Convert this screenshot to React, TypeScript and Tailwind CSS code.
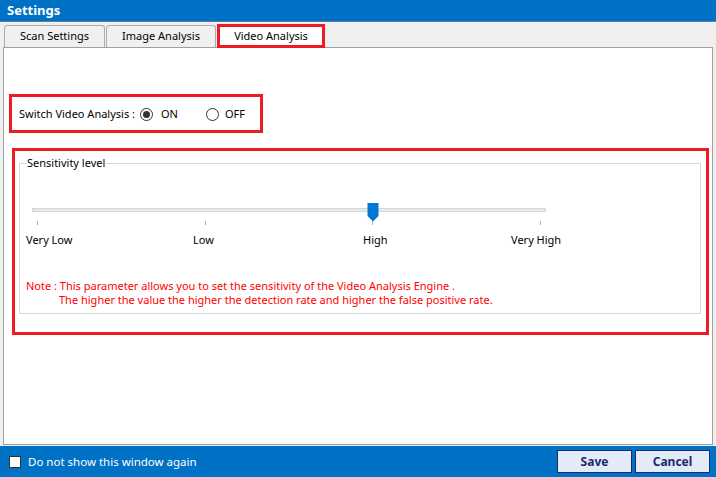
import React from "react";

const font = { fontFamily: "'Noto Sans', 'DejaVu Sans', sans-serif" };

const Tab: React.FC<{ label: string; active?: boolean; width: string }> = ({ label, active, width }) => {
	if (active) {
		return (
			<div className={`${width} h-[24px] -mb-px border-[3px] border-[#ed1c24] bg-white flex items-center justify-center text-[11px] text-black`}>
				{label}
			</div>
		);
	}
	return (
		<div className={`${width} h-[22px] mt-[2px] border border-b-0 border-[#acacac] rounded-t-[3px] bg-[#f0f0f0] flex items-center justify-center text-[11px] text-black`}>
			{label}
		</div>
	);
};

const Radio: React.FC<{ checked?: boolean }> = ({ checked }) => (
	<span className="w-[13px] h-[13px] rounded-full border border-[#333] bg-white flex items-center justify-center">
		{checked && <span className="w-[7px] h-[7px] rounded-full bg-[#333]" />}
	</span>
);

const ticks = [5, 173, 340, 508];

const App: React.FC = () => {
	return (
		<div style={font} className="w-[716px] h-[477px] flex flex-col bg-[#f0f0f0] overflow-hidden select-none">
			{/* title bar */}
			<div className="h-[22px] bg-[#0072c6] border-b border-[#5a7fa0] flex items-center pl-[7px]">
				<span className="text-white font-bold text-[13px] leading-none">Settings</span>
			</div>

			{/* tabs */}
			<div className="h-[25px] flex items-end pl-[4px] gap-[1px] relative z-10">
				<Tab label="Scan Settings" width="w-[101px]" />
				<Tab label="Image Analysis" width="w-[110px]" />
				<Tab label="Video Analysis" active width="w-[108px]" />
			</div>

			{/* content panel */}
			<div className="flex-1 mx-[3px] bg-white border border-[#a0a0a0] flex flex-col">
				{/* switch row */}
				<div className="mt-[46px] ml-[5px] w-[254px] h-[39px] border-[3px] border-[#ed1c24] flex items-center pl-[7px] pt-[2px] text-[11px] text-black whitespace-nowrap">
					<span>Switch Video Analysis :</span>
					<span className="ml-[5px]"><Radio checked /></span>
					<span className="ml-[8px]">ON</span>
					<span className="ml-[28px]"><Radio /></span>
					<span className="ml-[6px]">OFF</span>
				</div>

				{/* sensitivity */}
				<div className="mt-[15px] ml-[8px] w-[697px] h-[187px] border-[3px] border-[#ed1c24] pl-[4px] pt-[12px]">
					<div className="relative w-[682px] h-[151px] border border-[#d5d5d5]">
						<span className="absolute -top-[9px] left-[6px] bg-white px-[1px] text-[11px] leading-[16px] text-black">Sensitivity level</span>

						{/* slider */}
						<div className="relative mt-[44px] ml-[12px] w-[514px] h-[4px] bg-[#e7eaea] border border-[#d6d6d6]">
							<svg className="absolute left-[334px] -top-[6px]" width="12" height="19" viewBox="0 0 12 19">
								<path d="M0.5 0 H11.5 V13 L6 18.5 L0.5 13 Z" fill="#0078d7" />
							</svg>
						</div>
						<div className="relative ml-[12px] h-[4px] mt-[9px]">
							{ticks.map((t) => (
								<span key={t} className="absolute top-0 w-[1px] h-[4px] bg-[#b0b0b0]" style={{ left: t }} />
							))}
						</div>

						<div className="flex mt-[7px] text-[11px] text-black leading-[16px] whitespace-nowrap">
							<span className="ml-[6px] w-[167px]">Very Low</span>
							<span className="w-[170px]">Low</span>
							<span className="w-[148px]">High</span>
							<span>Very High</span>
						</div>

						<div className="mt-[31px] ml-[6px] text-[11px] leading-[14px] text-[#ff0000] whitespace-nowrap">
							<div>Note : This parameter allows you to set the sensitivity of the Video Analysis Engine .</div>
							<div className="pl-[33px]">The higher the value the higher the detection rate and higher the false positive rate.</div>
						</div>
					</div>
				</div>
			</div>

			{/* bottom bar */}
			<div className="h-[31px] mt-[1px] bg-[#0072c6] flex items-center pl-[9px] pr-[6px]">
				<span className="w-[12px] h-[12px] bg-white border border-[#333]" />
				<span className="ml-[7px] text-white text-[11.5px]">Do not show this window again</span>
				<div className="ml-auto flex gap-[3px]">
					<button className="w-[75px] h-[23px] bg-[#e3ebf8] border border-[#1b2a6b] text-[#1b2a6b] font-bold text-[12px]">Save</button>
					<button className="w-[75px] h-[23px] bg-[#e3ebf8] border border-[#1b2a6b] text-[#1b2a6b] font-bold text-[12px]">Cancel</button>
				</div>
			</div>
		</div>
	);
};

export default App;
